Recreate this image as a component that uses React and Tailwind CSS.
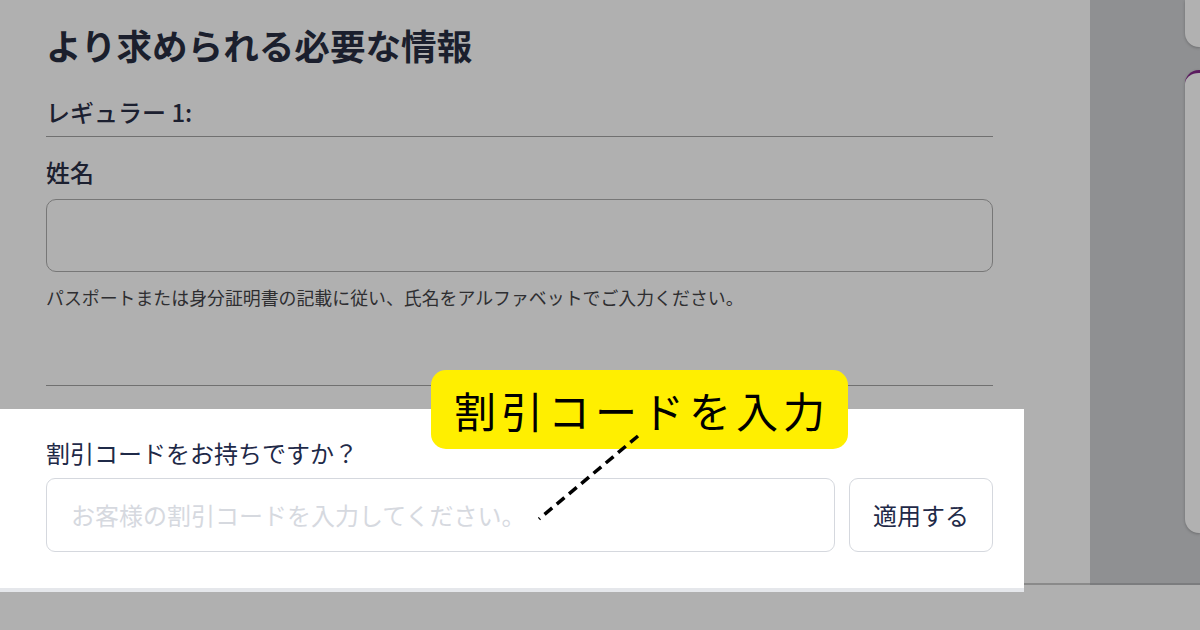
import React from 'react';

const jp = { fontFamily: '"Noto Sans CJK JP", "Noto Sans", sans-serif' };

function Sidebar() {
  return (
    <div className="w-[110px] h-[585px] bg-[#8f9092] border-b-2 border-[#7b7c7e] flex flex-col pl-[95px]">
      <div className="h-[47px] rounded-bl-[14px] bg-[#b1b1b1] shadow-[0_1px_3px_rgba(0,0,0,0.25)]" />
      <div className="mt-[23px] h-[463px] rounded-l-[14px] border-t-[3px] border-[#5b1b5f] bg-[#b1b1b1] shadow-[0_1px_3px_rgba(0,0,0,0.25)]" />
    </div>
  );
}

function DiscountSection() {
  return (
    <div className="flex items-start">
      <div className="w-[1024px] h-[183px] bg-white border-b-4 border-[#e5e7eb] pl-[46px] pt-[32px]">
        <div className="w-[947px]">
          <p className="text-[24px] leading-[24px] text-[#1f2a48]">割引コードをお持ちですか？</p>
          <div className="mt-[13px] flex gap-[14px] h-[74px]">
            <div className="w-[789px] h-full rounded-[9px] border border-[#d5d8de] flex items-center pl-[24px]">
              <span className="text-[24px] leading-[24px] text-[#d6d9df]">お客様の割引コードを入力してください。</span>
            </div>
            <button className="flex-1 h-full rounded-[9px] border border-[#d5d8de] bg-white text-[24px] leading-[24px] text-[#1f2a48] flex items-center justify-center">
              適用する
            </button>
          </div>
        </div>
      </div>
      <div className="flex-1 h-[176px] border-b-2 border-[#8a8a8a]" />
    </div>
  );
}

export default function App() {
  return (
    <div className="relative w-[1200px] h-[630px] overflow-hidden bg-[#b0b0b0]" style={jp}>
      <div className="flex items-start h-[592px]">
        <div className="w-[1090px] h-full flex flex-col">
          <div className="pl-[46px] w-[993px] pt-[27px]">
            <h1 className="text-[35.6px] leading-[36px] font-bold text-[#1b1f2d]">より求められる必要な情報</h1>
            <div className="mt-[37px] pb-[12px] border-b-[1.5px] border-[#707070]">
              <p className="text-[24px] leading-[24px] font-medium text-[#1c2030]">レギュラー 1:</p>
            </div>
            <p className="mt-[23px] text-[24px] leading-[24px] font-medium text-[#1c2030]">姓名</p>
            <div className="mt-[15px] h-[73px] rounded-[10px] border-[1.5px] border-[#777777]" />
            <p className="mt-[17px] text-[17.9px] leading-[17.6px] text-[#2e2e31]">
              パスポートまたは身分証明書の記載に従い、氏名をアルファベットでご入力ください。
            </p>
            <div className="mt-[78px] border-t-[1.5px] border-[#707070]" />
          </div>
          <div className="mt-auto">
            <DiscountSection />
          </div>
        </div>
        <Sidebar />
      </div>

      {/* callout */}
      <div className="absolute left-[431px] top-[370px] w-[417px] h-[79px] rounded-[15px] bg-[#ffef00] flex items-center justify-center">
        <span className="text-[42px] leading-[42px] tracking-[5px] font-normal text-black pl-[5px]">割引コードを入力</span>
      </div>
      <svg className="absolute left-0 top-0 pointer-events-none" width="1200" height="630">
        <line x1="638" y1="436" x2="539" y2="519" stroke="#000" strokeWidth="3.5" strokeDasharray="10 6" />
      </svg>
    </div>
  );
}
